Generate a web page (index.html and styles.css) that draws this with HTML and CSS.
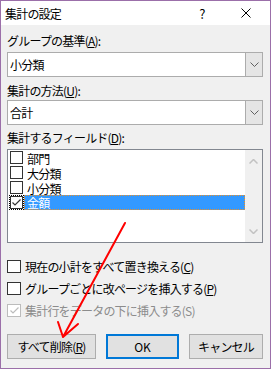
FILE: index.html
```html
<!DOCTYPE html>
<html lang="ja">
<head>
  <meta charset="UTF-8">
  <title>集計の設定</title>
  <link rel="stylesheet" href="styles.css">
</head>
<body>

  <div class="dialog">
    <div class="titlebar">
      <span class="title">集計の設定</span>
      <span class="help">?</span>
      <span class="close">
        <svg width="10" height="10" viewBox="0 0 10 10"><path d="M0.5 0.5L9.5 9.5M9.5 0.5L0.5 9.5" stroke="#000" stroke-width="1" fill="none"/></svg>
      </span>
    </div>

    <div class="content">
      <label class="field-label first">グループの基準(<u>A</u>):</label>
      <div class="combo">
        <span class="combo-text">小分類</span>
        <span class="combo-btn">
          <svg width="9" height="5" viewBox="0 0 9 5"><path d="M0.5 0.5L4.5 4.5L8.5 0.5" stroke="#606060" fill="none"/></svg>
        </span>
      </div>

      <label class="field-label second">集計の方法(<u>U</u>):</label>
      <div class="combo">
        <span class="combo-text">合計</span>
        <span class="combo-btn">
          <svg width="9" height="5" viewBox="0 0 9 5"><path d="M0.5 0.5L4.5 4.5L8.5 0.5" stroke="#606060" fill="none"/></svg>
        </span>
      </div>

      <label class="field-label third">集計するフィールド(<u>D</u>):</label>
      <div class="listbox">
        <ul class="items">
          <li class="item"><span class="box"></span><span class="item-text">部門</span></li>
          <li class="item"><span class="box"></span><span class="item-text">大分類</span></li>
          <li class="item"><span class="box"></span><span class="item-text">小分類</span></li>
          <li class="item selected">
            <span class="box focus">
              <svg width="11" height="11" viewBox="0 0 11 11"><path d="M1.5 5.5L4 8L9.5 2.5" stroke="#333" stroke-width="1.2" fill="none"/></svg>
            </span>
            <span class="item-text">金額</span>
          </li>
        </ul>
        <div class="scrollbar">
          <svg width="9" height="5" viewBox="0 0 9 5"><path d="M0.5 4.5L4.5 0.5L8.5 4.5" stroke="#c2c2c2" stroke-width="1.5" fill="none"/></svg>
          <svg width="9" height="5" viewBox="0 0 9 5"><path d="M0.5 0.5L4.5 4.5L8.5 0.5" stroke="#c2c2c2" stroke-width="1.5" fill="none"/></svg>
        </div>
      </div>

      <div class="options">
        <div class="option"><span class="box"></span><span class="option-text">現在の小計をすべて置き換える(<u>C</u>)</span></div>
        <div class="option"><span class="box"></span><span class="option-text">グループごとに改ページを挿入する(<u>P</u>)</span></div>
        <div class="option disabled">
          <span class="box">
            <svg width="11" height="11" viewBox="0 0 11 11"><path d="M1.5 5.5L4 8L9.5 2.5" stroke="#bcbcbc" stroke-width="1.2" fill="none"/></svg>
          </span>
          <span class="option-text">集計行をデータの下に挿入する(S)</span>
        </div>
      </div>

      <div class="buttons">
        <button class="btn remove">すべて削除(<u>R</u>)</button>
        <button class="btn ok">OK</button>
        <button class="btn cancel">キャンセル</button>
      </div>
    </div>

    <!-- red pointer drawn over the dialog -->
    <svg class="arrow" width="271" height="369" viewBox="0 0 271 369">
      <path d="M125 223L63 337M63 337L58 322M63 337L78 324" stroke="#ff0000" stroke-width="2" stroke-linecap="round" fill="none"/>
    </svg>
  </div>

</body>
</html>
```

FILE: styles.css
```css
body {
  margin: 0;
  font-family: "Noto Sans CJK JP", "Noto Sans", sans-serif;
  font-size: 12px;
  letter-spacing: -0.8px;
  color: #000000;
}

.dialog {
  position: relative;
  width: 271px;
  height: 369px;
  box-sizing: border-box;
  border: 1px solid #9b6fa9;
  background: #f0f0f0;
}

.titlebar {
  display: flex;
  align-items: center;
  height: 24px;
  background: #ffffff;
  padding-left: 4px;
}

.help {
  margin-left: auto;
  width: 16px;
  text-align: center;
  font-size: 13px;
}

.close {
  display: flex;
  justify-content: center;
  width: 30px;
  margin-left: 21px;
  margin-right: 9px;
}

.content {
  padding: 0 7px 0 6px;
}

.field-label {
  display: block;
  line-height: 16px;
}

.field-label.first {
  margin-top: 8px;
  margin-bottom: 3px;
}

.field-label.second {
  margin-top: 6px;
  margin-bottom: 1px;
}

.field-label.third {
  margin-top: 5px;
  margin-bottom: 3px;
}

.combo {
  display: flex;
  height: 25px;
  box-sizing: border-box;
  border: 1px solid #acacac;
  background: #ffffff;
}

.combo-text {
  flex: 1;
  display: flex;
  align-items: center;
  padding-left: 2px;
}

.combo-btn {
  width: 16px;
  display: flex;
  align-items: center;
  justify-content: center;
  background: #e5e5e5;
  border-left: 1px solid #acacac;
}

.listbox {
  display: flex;
  height: 94px;
  box-sizing: border-box;
  border: 1px solid #828790;
  background: #ffffff;
}

.items {
  flex: 1;
  list-style: none;
  margin: 0;
  padding: 0;
}

.item {
  display: flex;
  align-items: center;
  height: 15px;
}

.box {
  display: flex;
  align-items: center;
  justify-content: center;
  width: 13px;
  height: 13px;
  box-sizing: border-box;
  border: 1px solid #333333;
  background: #ffffff;
  flex-shrink: 0;
}

.item .box {
  margin-left: 2px;
}

.item-text {
  flex: 1;
  height: 15px;
  line-height: 15px;
  margin-left: 1px;
  padding-left: 2px;
  box-sizing: border-box;
  border: 1px solid transparent;
}

.item.selected .item-text {
  background: #3399ff;
  color: #ffffff;
  border: 1px dotted #e8902a;
  line-height: 13px;
}

.box.focus {
  outline: 1px dotted #000000;
}

.scrollbar {
  width: 17px;
  background: #f0f0f0;
  display: flex;
  flex-direction: column;
  align-items: center;
  justify-content: space-between;
  padding: 9px 0 8px;
  box-sizing: border-box;
}

.options {
  margin-top: 15px;
  display: flex;
  flex-direction: column;
  gap: 6px;
}

.option {
  display: flex;
  align-items: center;
  height: 16px;
  gap: 4px;
}

.option .box {
  width: 14px;
  height: 13px;
}

.option.disabled {
  color: #8c8c8c;
}

.option.disabled .box {
  border-color: #bcbcbc;
}

.buttons {
  display: flex;
  gap: 10px;
  margin-top: 16px;
}

.btn {
  height: 25px;
  box-sizing: border-box;
  background: #e1e1e1;
  border: 1px solid #adadad;
  font-family: inherit;
  font-size: 12px;
  letter-spacing: -0.8px;
  color: #000000;
  padding: 0;
}

.btn.remove {
  width: 89px;
}

.btn.ok {
  width: 73px;
  border: 2px solid #0078d7;
  letter-spacing: 0;
}

.btn.cancel {
  width: 74px;
}

.arrow {
  position: absolute;
  left: -1px;
  top: -1px;
  pointer-events: none;
}
```
